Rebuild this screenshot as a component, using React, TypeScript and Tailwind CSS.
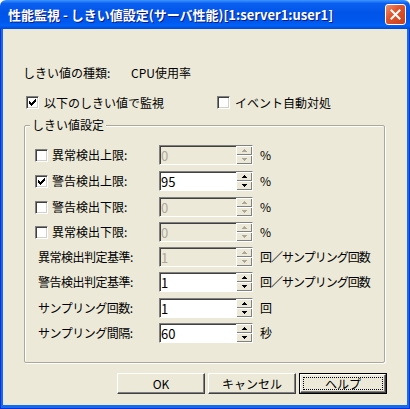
import React from 'react';

function CheckBox({ checked }: { checked?: boolean }) {
  return (
    <span className="relative inline-block h-[13px] w-[13px] shrink-0 border border-t-[#808080] border-l-[#808080] border-b-white border-r-white bg-white shadow-[inset_1px_1px_0_#404040,inset_-1px_-1px_0_#d4d0c8]">
      {checked && (
        <svg className="absolute left-[2px] top-[2px]" width="7" height="7" viewBox="0 0 7 7" shapeRendering="crispEdges">
          <path
            d="M0 2h1v3h-1zM1 3h1v3h-1zM2 4h1v3h-1zM3 3h1v3h-1zM4 2h1v3h-1zM5 1h1v3h-1zM6 0h1v3h-1z"
            fill="#000"
          />
        </svg>
      )}
    </span>
  );
}

function Arrow({ up, disabled }: { up?: boolean; disabled?: boolean }) {
  const fill = disabled ? '#aca899' : '#000';
  return (
    <svg width="5" height="3" viewBox="0 0 5 3" shapeRendering="crispEdges">
      {up ? <path d="M2 0h1v1h1v1h1v1h-5v-1h1v-1h1z" fill={fill} /> : <path d="M0 0h5v1h-1v1h-1v1h-1v-1h-1v-1h-1z" fill={fill} />}
    </svg>
  );
}

function SpinField({ value, disabled }: { value: string; disabled?: boolean }) {
  return (
    <div
      className={
        disabled
          ? 'flex h-[20px] w-[94px] shrink-0 border border-t-[#808080] border-l-[#808080] border-b-white border-r-white bg-[#ece9d8]'
          : 'flex h-[20px] w-[94px] shrink-0 border border-t-[#808080] border-l-[#808080] border-b-white border-r-white bg-white'
      }
    >
      <div
        className={
          disabled
            ? 'flex flex-1 items-center pl-[1px] text-[13px] leading-none text-[#aca899] shadow-[inset_1px_1px_0_#404040]'
            : 'flex flex-1 items-center pl-[1px] text-[13px] leading-none text-black shadow-[inset_1px_1px_0_#404040]'
        }
      >
        {value}
      </div>
      <div className="flex w-[16px] flex-col bg-[#ece9d8]">
        <div className="flex h-[9px] items-center justify-center shadow-[inset_1px_1px_0_#fff,inset_-1px_-1px_0_#808080]">
          <Arrow up disabled={disabled} />
        </div>
        <div className="flex h-[9px] items-center justify-center shadow-[inset_1px_1px_0_#fff,inset_-1px_-1px_0_#808080]">
          <Arrow disabled={disabled} />
        </div>
      </div>
    </div>
  );
}

function CheckRow({ label, checked, value, disabled, unit, extra }: { label: string; checked?: boolean; value: string; disabled?: boolean; unit: string; extra?: string }) {
  return (
    <div className={extra ? 'flex h-[20px] items-center mt-[1px]' : 'flex h-[20px] items-center'}>
      <div className="flex w-[124px] items-center">
        <CheckBox checked={checked} />
        <span className="ml-[4px] whitespace-nowrap">{label}</span>
      </div>
      <SpinField value={value} disabled={disabled} />
      <span className="ml-[7px] whitespace-nowrap">{unit}</span>
    </div>
  );
}

function LabelRow({ label, value, disabled, unit, extra }: { label: string; value: string; disabled?: boolean; unit: string; extra?: string }) {
  return (
    <div className={extra ? 'flex h-[20px] items-center mt-[1px]' : 'flex h-[20px] items-center'}>
      <div className="w-[124px] pl-[3px] whitespace-nowrap tracking-[-0.5px]">{label}</div>
      <SpinField value={value} disabled={disabled} />
      <span className="ml-[7px] whitespace-nowrap tracking-[-1px]">{unit}</span>
    </div>
  );
}

function Button({ label, focused }: { label: string; focused?: boolean }) {
  if (focused) {
    return (
      <div className="h-[21px] w-[88px] border border-black">
        <div className="relative flex h-full w-full items-center justify-center border border-t-white border-l-white border-b-[#404040] border-r-[#404040] bg-[#ece9d8] shadow-[inset_-1px_-1px_0_#808080]">
          <span className="absolute inset-[2px] border border-dotted border-black" />
          {label}
        </div>
      </div>
    );
  }
  return (
    <div className="flex h-[21px] w-[88px] items-center justify-center border border-t-white border-l-white border-b-[#404040] border-r-[#404040] bg-[#ece9d8] shadow-[inset_-1px_-1px_0_#808080]">
      {label}
    </div>
  );
}

export default function App() {
  return (
    <div className="flex h-[409px] w-[410px] flex-col bg-white font-['Noto_Sans_CJK_JP','Noto_Sans',sans-serif] text-[12px] leading-[16px] text-black">
      {/* Title bar */}
      <div className="flex h-[29px] shrink-0 items-center justify-between rounded-t-[6px] bg-[linear-gradient(180deg,#3d95ff_0%,#0a5ff0_12%,#0054e8_45%,#0058ee_75%,#0062f7_88%,#0048d8_100%)] pl-[8px] pr-[4px]">
        <span className="whitespace-nowrap text-[13px] font-bold leading-none text-white [text-shadow:1px_1px_#0a1883]">
          性能監視 - しきい値設定(サーバ性能)[1:server1:user1]
        </span>
        <div className="flex h-[21px] w-[21px] items-center justify-center rounded-[3px] border border-white bg-[linear-gradient(135deg,#f0916d_0%,#e0552e_40%,#c8401c_100%)]">
          <svg width="11" height="11" viewBox="0 0 11 11">
            <path d="M1.5 1.5L9.5 9.5M9.5 1.5L1.5 9.5" stroke="#fff" strokeWidth="2" strokeLinecap="square" />
          </svg>
        </div>
      </div>

      {/* Body */}
      <div className="flex flex-1 flex-col bg-[#0831d9] px-[1px] pb-[1px]">
        <div className="flex flex-1 flex-col border-x-2 border-b-[3px] border-[#166aee] bg-[#ece9d8]">
          <div className="mt-[36px] flex pl-[20px]">
            <span className="w-[108px] whitespace-nowrap">しきい値の種類:</span>
            <span>CPU使用率</span>
          </div>

          <div className="mt-[15px] flex h-[13px] items-center pl-[23px]">
            <div className="flex w-[191px] items-center">
              <CheckBox checked />
              <span className="ml-[5px] whitespace-nowrap">以下のしきい値で監視</span>
            </div>
            <div className="flex items-center">
              <CheckBox />
              <span className="ml-[5px] whitespace-nowrap">イベント自動対処</span>
            </div>
          </div>

          <div className="relative ml-[21px] mt-[16px] w-[361px] rounded-[2px] border border-[#aca899] pb-[19px] pl-[10px] pt-[19px] shadow-[inset_1px_1px_0_#fff,1px_1px_0_#fff]">
            <span className="absolute -top-[9px] left-[5px] bg-[#ece9d8] px-[2px] whitespace-nowrap">しきい値設定</span>
            <div className="flex flex-col gap-[5px]">
              <CheckRow label="異常検出上限:" value="0" disabled unit="%" />
              <CheckRow label="警告検出上限:" value="95" checked unit="%" extra="1" />
              <CheckRow label="警告検出下限:" value="0" disabled unit="%" extra="1" />
              <CheckRow label="異常検出下限:" value="0" disabled unit="%" />
              <LabelRow label="異常検出判定基準:" value="1" disabled unit="回／サンプリング回数" />
              <LabelRow label="警告検出判定基準:" value="1" unit="回／サンプリング回数" />
              <LabelRow label="サンプリング回数:" value="1" unit="回" extra="1" />
              <LabelRow label="サンプリング間隔:" value="60" unit="秒" />
            </div>
          </div>

          <div className="mt-[10px] flex justify-end gap-[3px] pr-[20px]">
            <Button label="OK" />
            <Button label="キャンセル" />
            <Button label="ヘルプ" focused />
          </div>
        </div>
      </div>
    </div>
  );
}
